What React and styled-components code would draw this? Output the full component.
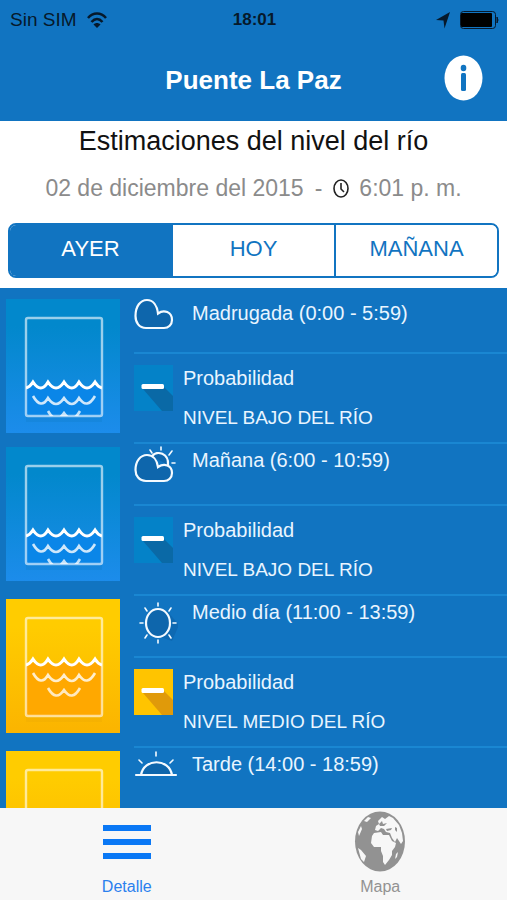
import React from "react";
import styled, { createGlobalStyle } from "styled-components";

const GlobalStyle = createGlobalStyle`
  * {
    box-sizing: border-box;
  }
  body {
    margin: 0;
    font-family: "Liberation Sans", Arial, sans-serif;
  }
`;

const Screen = styled.div`
  display: flex;
  flex-direction: column;
  height: 100vh;
  background: #1174c1;
  overflow: hidden;
`;

const StatusBar = styled.div`
  display: grid;
  grid-template-columns: 1fr auto 1fr;
  align-items: center;
  height: 40px;
  padding: 0 8px 0 10px;
  color: #06192b;
  font-size: 19px;

  div {
    display: flex;
    align-items: center;
    gap: 10px;
  }
  div:last-child {
    justify-content: flex-end;
  }
  time {
    font-size: 17px;
    font-weight: bold;
  }
`;

const TitleBar = styled.header`
  display: grid;
  grid-template-columns: 1fr auto 1fr;
  align-items: center;
  height: 81px;
  padding: 0 24px;

  h1 {
    grid-column: 2;
    margin: 0;
    color: #fff;
    font-size: 26px;
  }
`;

const InfoButton = styled.button`
  display: flex;
  justify-self: end;
  padding: 0 0 6px;
  border: none;
  background: none;
  cursor: pointer;
`;

const Summary = styled.section`
  display: flex;
  flex-direction: column;
  height: 167px;
  padding: 2px 8px 10px;
  background: #fff;

  h2 {
    margin: 0;
    color: #111;
    font-size: 27px;
    font-weight: normal;
    line-height: 36px;
    text-align: center;
  }
`;

const DateLine = styled.p`
  display: flex;
  flex: 1;
  align-items: center;
  justify-content: center;
  gap: 11px;
  margin: 0;
  padding-bottom: 6px;
  color: #8b8b8b;
  font-size: 23px;

  span {
    display: flex;
    align-items: center;
    gap: 10px;
  }
`;

const Segments = styled.div`
  display: flex;
  height: 55px;
  border: 2px solid #1174c1;
  border-radius: 8px;
  overflow: hidden;
`;

const Segment = styled.button`
  flex: 1;
  padding: 0 0 4px;
  border: none;
  border-right: 2px solid #1174c1;
  background: ${(props) => (props.$active ? "#1174c1" : "#fff")};
  color: ${(props) => (props.$active ? "#fff" : "#1174c1")};
  font-family: inherit;
  font-size: 22px;
  cursor: pointer;

  &:last-child {
    border-right: none;
  }
`;

const List = styled.ul`
  flex: 1;
  min-height: 0;
  margin: 0;
  padding: 4px 0 0;
  overflow: hidden;
  list-style: none;
`;

const Row = styled.li`
  display: flex;
  gap: 14px;
  height: 152px;
  padding-left: 6px;

  > svg {
    flex: none;
    margin-top: 3px;
  }
  &:first-child > svg {
    margin-top: 7px;
  }
`;

const Info = styled.div`
  flex: 1;
`;

const Period = styled.div`
  display: flex;
  gap: 14px;
  height: 62px;
  border-bottom: 2px solid #1a87d2;
  color: #e9f5ff;
  font-size: 20px;
  line-height: 24px;

  span {
    padding-top: 4px;
  }
  ${Row}:first-child & span {
    padding-top: 9px;
  }
`;

const Level = styled.div`
  display: flex;
  gap: 10px;
  height: 90px;
  padding-top: 11px;
  border-bottom: 2px solid #1a87d2;
  color: #e9f5ff;

  p {
    margin: 0 0 14px;
    font-size: 20px;
    line-height: 26px;
  }
  p + p {
    font-size: 19px;
  }
`;

const TabBar = styled.nav`
  display: flex;
  height: 92px;
  background: #f7f7f7;
`;

const Tab = styled.a`
  display: flex;
  flex: 1;
  flex-direction: column;
  align-items: center;
  justify-content: space-between;
  padding: 3px 0;
  color: ${(props) => (props.$active ? "#2a80ee" : "#929292")};
  font-size: 16px;
  line-height: 20px;
  text-decoration: none;
`;

const palettes = {
  low: { top: "#0288cc", bottom: "#1c8ceb", water: "#0a86e8", shade: "#0a69a6" },
  mid: { top: "#ffcc00", bottom: "#fbb400", water: "#ffa800", shade: "#e09a0a" },
};

function WaterTile({ level, id }) {
  const c = palettes[level];
  const y = level === "low" ? 87 : 64;
  return (
    <svg width="114" height="134" viewBox="0 0 114 134">
      <defs>
        <linearGradient id={id} x2="0" y2="1">
          <stop offset="0.2" stopColor={c.top} />
          <stop offset="1" stopColor={c.bottom} />
        </linearGradient>
        <clipPath id={id + "-glass"}>
          <rect x="20" y="19" width="76" height="98" />
        </clipPath>
      </defs>
      <rect width="114" height="134" fill={`url(#${id})`} />
      <rect x="20" y="118" width="76" height="5" fill={c.shade} opacity="0.15" />
      <g clipPath={`url(#${id}-glass)`}>
        <rect x="20" y={y} width="76" height="60" fill={c.water} />
        <g fill="none" stroke="#fff">
          <path
            d={`M20 ${y + 2} Q24 ${y + 1} 27 ${y - 4} Q35 ${y + 8} 42 ${y - 4} Q50 ${y + 8} 58 ${y - 4} Q66 ${y + 8} 73 ${y - 4} Q81 ${y + 8} 89 ${y - 4} Q92 ${y + 1} 96 ${y + 2}`}
            strokeWidth="3"
          />
          <path
            d={`M27 ${y + 10} Q35 ${y + 24} 42 ${y + 12} Q50 ${y + 24} 58 ${y + 12} Q66 ${y + 24} 73 ${y + 12} Q81 ${y + 24} 89 ${y + 10}`}
            strokeWidth="2.6"
            opacity="0.8"
          />
          <path
            d={`M42 ${y + 25} Q50 ${y + 39} 58 ${y + 27} Q66 ${y + 39} 74 ${y + 25}`}
            strokeWidth="2.6"
            opacity="0.75"
          />
        </g>
      </g>
      <rect x="20" y="19" width="76" height="98" rx="2" fill="none" stroke="#fff" strokeWidth="2.4" opacity="0.6" />
    </svg>
  );
}

function LevelIcon({ level }) {
  const c = palettes[level];
  return (
    <svg width="39" height="46" viewBox="0 0 39 46">
      <rect width="39" height="46" fill={level === "low" ? "#0482c8" : "#ffc400"} />
      <path d="M9 24 L29 21 L39 31 V46 H28 Z" fill={c.shade} />
      <rect x="7.5" y="19" width="22.5" height="5" rx="1.5" fill="#fff" />
    </svg>
  );
}

const CLOUD =
  "M12 36 C5 36 1.5 30.5 1.5 24 C1.5 14 6.5 8 13 8 C19 8 23 13.5 24 21.5 C30 17 38 20 38 28 C38 32.5 34.5 36 30 36 Z";

function WeatherIcon({ kind }) {
  return (
    <svg width="44" height="48" viewBox="0 0 44 48" fill="none" stroke="#f4faff" strokeWidth="2.2" strokeLinecap="round">
      {kind === "cloud" && <path d={CLOUD} fill="#0e66ac" />}
      {kind === "cloudsun" && (
        <>
          <path d="M18 12 C23 6 35 9 34 21" fill="#0e66ac" />
          <path
            d="M12 37 C5 37 1.5 31.5 1.5 26 C1.5 17 6.5 11 13 11 C19 11 23 16 24 23 C30 19 38 21 38 29 C38 33.5 34.5 37 30 37 Z"
            fill="#0e66ac"
          />
          <path d="M16 6 L18 9 M27 3 V6 M38 7 L35 11 M38 19 H41" strokeWidth="1.6" />
        </>
      )}
      {kind === "sun" && (
        <>
          <path d="M33 15 L45 29 L38 45 L15 37 Z" fill="#0e69b2" stroke="none" />
          <ellipse cx="24" cy="27" rx="12" ry="14" fill="#0e66ac" />
          <path
            d="M24 7 V10 M24 44 V47 M6 27 H9 M39 27 H42 M11 12 L13 15 M37 12 L35 15 M11 42 L13 39 M37 42 L35 39"
            strokeWidth="1.6"
          />
        </>
      )}
      {kind === "sunset" && (
        <>
          <path d="M7 27 C10 10 35 10 38 27" fill="#0e66ac" />
          <path d="M2 27 H42" />
          <path d="M22 4 V8 M5 12 L8 15 M39 12 L36 15" strokeWidth="1.6" />
        </>
      )}
    </svg>
  );
}

function Globe() {
  return (
    <svg width="52" height="61" viewBox="0 0 52 61">
      <ellipse cx="26" cy="30.5" rx="25" ry="30" fill="#929292" />
      <g fill="#f7f7f7">
        <path d="M21 19 L22 15 L25 13 L24 10 L28 6 L31 8 L35 5 L39 7 L45 14 L48 22 L49 30 L47 33 L45 30 L43 27 L41 31 L38 27 L36 22 L32 21 L30 18 L27 17 L24 20 Z" />
        <path d="M18 25 L20 22 L27 21 L29 24 L35 24 L38 30 L42 32 L41 36 L38 40 L38 44 L35 49 L31 54 L29 51 L29 45 L27 40 L27 36 L20 36 L17 32 Z" />
        <path d="M4 37 L7 39 L12 45 L10 51 L7 48 Z M4 21 L7 15 L8 18 L5 25 Z M10 10 L14 6 L17 7 L13 11 Z M42 43 L44 41 L43 46 L41 48 Z" />
      </g>
      <g fill="#929292">
        <path d="M25 13 L28 10 L29 13 L33 12 L30 15 L26 15 Z M32 18 L38 17 L37 19 L33 20 Z M41 16 L43 17 L43 21 L41 19 Z" />
      </g>
    </svg>
  );
}

const periods = [
  { label: "Madrugada (0:00 - 5:59)", icon: "cloud", level: "low", text: "NIVEL BAJO DEL RÍO" },
  { label: "Mañana (6:00 - 10:59)", icon: "cloudsun", level: "low", text: "NIVEL BAJO DEL RÍO" },
  { label: "Medio día (11:00 - 13:59)", icon: "sun", level: "mid", text: "NIVEL MEDIO DEL RÍO" },
  { label: "Tarde (14:00 - 18:59)", icon: "sunset", level: "mid" },
];

function App() {
  const [day, setDay] = React.useState("AYER");

  return (
    <Screen>
      <GlobalStyle />
      <StatusBar>
        <div>
          Sin SIM
          <svg width="20" height="17" viewBox="0 0 20 17" fill="none" stroke="#06192b" strokeWidth="2.5">
            <path d="M1 6 C6 0 14 0 19 6 M4.5 10 C8 6 12 6 15.5 10" />
            <path d="M10 16 L6.5 12.5 C8.5 10.5 11.5 10.5 13.5 12.5 Z" fill="#06192b" stroke="none" />
          </svg>
        </div>
        <time>18:01</time>
        <div>
          <svg width="14" height="17" viewBox="0 0 14 17">
            <path d="M14 0 L8.5 16.5 L7.5 8.5 L0 8 Z" fill="#06192b" />
          </svg>
          <svg width="39" height="18" viewBox="0 0 39 18">
            <rect x="0.5" y="0.5" width="35" height="17" rx="3" fill="none" stroke="#06192b" />
            <rect x="1" y="2" width="31" height="14" rx="1" fill="#000" />
            <path d="M37 6 Q39 9 37 12 Z" fill="#06192b" stroke="#06192b" />
          </svg>
        </div>
      </StatusBar>
      <TitleBar>
        <h1>Puente La Paz</h1>
        <InfoButton aria-label="Información">
          <svg width="39" height="46" viewBox="0 0 39 46">
            <ellipse cx="19.5" cy="23" rx="19" ry="22.5" fill="#fff" />
            <ellipse cx="19.5" cy="13" rx="2.8" ry="3.3" fill="#1174c1" />
            <rect x="17" y="18" width="5" height="18" rx="1.5" fill="#1174c1" />
          </svg>
        </InfoButton>
      </TitleBar>
      <Summary>
        <h2>Estimaciones del nivel del río</h2>
        <DateLine>
          02 de diciembre del 2015
          <span>-</span>
          <span>
            <svg width="16" height="19" viewBox="0 0 16 19" fill="none" stroke="#222" strokeWidth="1.6">
              <ellipse cx="8" cy="9.5" rx="7" ry="8.5" />
              <path d="M8 4 V10 L11 13" />
            </svg>
            6:01 p. m.
          </span>
        </DateLine>
        <Segments>
          {["AYER", "HOY", "MAÑANA"].map((name) => (
            <Segment key={name} $active={day === name} onClick={() => setDay(name)}>
              {name}
            </Segment>
          ))}
        </Segments>
      </Summary>
      <List>
        {periods.map((item, i) => (
          <Row key={item.label}>
            <WaterTile level={item.level} id={"tile" + i} />
            <Info>
              <Period>
                <WeatherIcon kind={item.icon} />
                <span>{item.label}</span>
              </Period>
              {item.text && (
                <Level>
                  <LevelIcon level={item.level} />
                  <div>
                    <p>Probabilidad</p>
                    <p>{item.text}</p>
                  </div>
                </Level>
              )}
            </Info>
          </Row>
        ))}
      </List>
      <TabBar>
        <Tab href="#detalle" $active>
          <svg width="48" height="61" viewBox="0 0 48 61" fill="#0a78f5">
            <path d="M0 14 H48 V20 H0 Z M0 28 H48 V34 H0 Z M0 42 H48 V48 H0 Z" />
          </svg>
          Detalle
        </Tab>
        <Tab href="#mapa">
          <Globe />
          Mapa
        </Tab>
      </TabBar>
    </Screen>
  );
}

export default App;
